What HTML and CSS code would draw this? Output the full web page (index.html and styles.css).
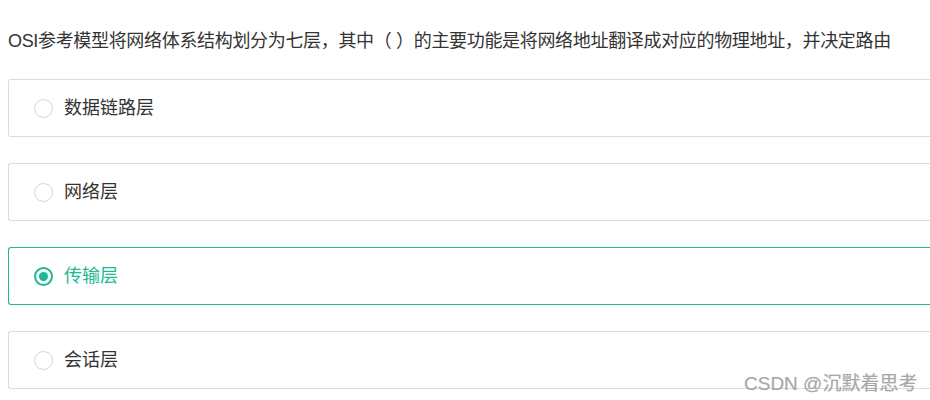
FILE: index.html
```html
<!DOCTYPE html>
<html lang="zh-CN">

<head>
    <meta charset="UTF-8">
    <meta name="viewport" content="width=device-width, initial-scale=1.0">
    <title>选择题</title>
    <link rel="stylesheet" href="styles.css">
</head>

<body>
    <div class="question">
        <p class="title">OSI参考模型将网络体系结构划分为七层，其中（ ）的主要功能是将网络地址翻译成对应的物理地址，并决定路由</p>
        <ul class="options">
            <li class="opt"><span class="radio"></span><span class="txt">数据链路层</span></li>
            <li class="opt"><span class="radio"></span><span class="txt">网络层</span></li>
            <li class="opt on"><span class="radio"></span><span class="txt">传输层</span></li>
            <li class="opt"><span class="radio"></span><span class="txt">会话层</span></li>
        </ul>
    </div>
    <div class="mark">CSDN @沉默着思考</div>
</body>

</html>
```

FILE: styles.css
```css
html {
    overflow: hidden;
}

body {
    margin: 0 0 0 8px;
    padding-top: 1px;
    font-family: "Liberation Sans", "Noto Sans CJK SC", sans-serif;
    color: #333;
    background: #fff;
}

.title {
    margin: 27px 0 25px;
    font-size: 18px;
    line-height: 26px;
    letter-spacing: -0.33px;
    white-space: nowrap;
}

.options {
    margin: 0;
    padding: 0;
    list-style: none;
    display: flex;
    flex-direction: column;
    gap: 26px;
}

/* 选项框，右边被裁掉 */
.opt {
    height: 56px;
    border: 1px solid #dcdcdc;
    border-right: none;
    border-radius: 3px 0 0 3px;
    display: flex;
    align-items: center;
    padding-left: 25px;
    font-size: 18px;
    cursor: pointer;
}

/* 单选圆圈 */
.radio {
    width: 19px;
    height: 19px;
    border: 1px solid #d6d6d6;
    border-radius: 50%;
    box-sizing: border-box;
    display: flex;
    align-items: center;
    justify-content: center;
    margin-right: 11px;
    flex-shrink: 0;
}

.txt {
    line-height: 24px;
}

/* 选中项 */
.opt.on {
    border-color: #1cb994;
    color: #1cb994;
}

.opt.on .radio {
    border: 2px solid #1cb994;
}

.opt.on .radio::after {
    content: "";
    width: 9px;
    height: 9px;
    border-radius: 50%;
    background: #1cb994;
}

.mark {
    position: absolute;
    left: 744px;
    top: 368px;
    font-size: 19px;
    color: #a8a8a8;
    text-shadow: 0 0 1px rgba(0, 0, 0, 0.15);
}
```
